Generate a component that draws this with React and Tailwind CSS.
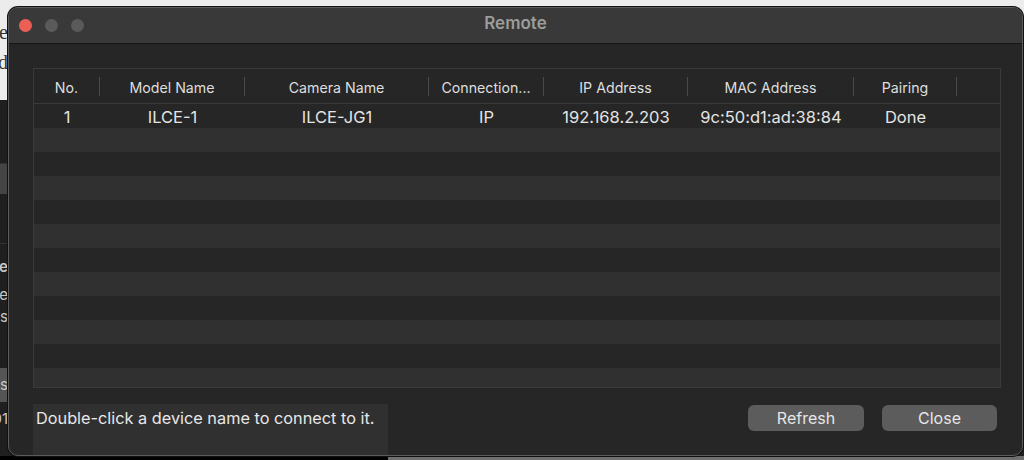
import React from 'react';

const columns = [
  { key: 'no', label: 'No.', w: 'w-[66px]' },
  { key: 'model', label: 'Model Name', w: 'w-[145px]' },
  { key: 'camera', label: 'Camera Name', w: 'w-[184px]' },
  { key: 'conn', label: 'Connection...', w: 'w-[115px]' },
  { key: 'ip', label: 'IP Address', w: 'w-[144px]' },
  { key: 'mac', label: 'MAC Address', w: 'w-[166px]' },
  { key: 'pair', label: 'Pairing', w: 'w-[103px]' },
];

const devices = [
  {
    no: '1',
    model: 'ILCE-1',
    camera: 'ILCE-JG1',
    conn: 'IP',
    ip: '192.168.2.203',
    mac: '9c:50:d1:ad:38:84',
    pair: 'Done',
  },
];

const ROW_COUNT = 12;

export default function App() {
  const rows = Array.from({ length: ROW_COUNT }, (_, i) => devices[i] || null);

  return (
    <div
      className="relative w-[1024px] h-[460px] overflow-hidden bg-[#1f1f1f]"
      style={{ fontFamily: 'Inter, "Noto Sans", sans-serif' }}
    >
      {/* app behind the dialog */}
      <div className="flex flex-col h-full">
        <div className="h-[100px] bg-[#ececec] flex">
          <div className="w-[8px] overflow-hidden flex flex-col items-end pt-[20px] gap-[6px] text-[20px] leading-[24px] text-[#333]" style={{ fontFamily: '"Liberation Serif", serif' }}>
            <span className="whitespace-nowrap">see</span>
            <span className="whitespace-nowrap">and</span>
          </div>
        </div>
        <div className="flex-1 flex flex-col w-[8px] overflow-hidden text-[#c8c8c8] text-[15px]">
          <div className="h-[64px] border-b border-[#333]"></div>
          <div className="h-[30px] bg-[#444]"></div>
          <div className="h-[50px] border-b border-[#333]"></div>
          <div className="flex flex-col items-end pt-[12px] leading-[22px]">
            <span className="whitespace-nowrap font-semibold">Name</span>
            <span className="whitespace-nowrap mt-[6px]">Name</span>
            <span className="whitespace-nowrap">items</span>
          </div>
          <div className="mt-[40px] h-[34px] bg-[#555] flex justify-end items-center">
            <span className="whitespace-nowrap">Settings</span>
          </div>
          <div className="flex justify-end pt-[6px]">
            <span className="whitespace-nowrap">01</span>
          </div>
        </div>
        <div className="h-[4px] flex">
          <div className="w-[388px] bg-black"></div>
          <div className="flex-1 bg-[#707070]"></div>
        </div>
      </div>

      {/* Remote window */}
      <div className="absolute left-[8px] top-[7px] w-[1015px] h-[449px] rounded-[10px] overflow-hidden border border-[#5c5c5c] bg-[#262626] flex flex-col shadow-[0_0_0_1px_#111]">
        <div className="relative h-[36px] shrink-0 bg-[#393939] border-b border-[#161616] flex items-center justify-center">
          <div className="absolute left-[10px] top-[11px] flex gap-[13px]">
            <span className="w-[13px] h-[13px] rounded-full bg-[#ec5f57]"></span>
            <span className="w-[13px] h-[13px] rounded-full bg-[#5a5a5a]"></span>
            <span className="w-[13px] h-[13px] rounded-full bg-[#5a5a5a]"></span>
          </div>
          <span className="text-[17px] font-semibold text-[#9c9c9c] -mt-[3px]">Remote</span>
        </div>

        <div className="flex-1 flex flex-col px-[24px] pt-[24px]">
          <div className="w-[968px] h-[320px] border border-[#3a3a3a] overflow-hidden flex flex-col">
            <div className="h-[35px] shrink-0 flex items-center border-b border-[#3a3a3a] text-[14.2px] text-[#dedede]">
              {columns.map(c => (
                <div key={c.key} className={`${c.w} h-full flex items-center`}>
                  <span className="flex-1 text-center whitespace-nowrap pt-[3px]">{c.label}</span>
                  <span className="w-px h-[19px] bg-[#4a4a4a]"></span>
                </div>
              ))}
              <div className="flex-1"></div>
            </div>
            {rows.map((d, i) => (
              <div
                key={i}
                className={`h-[24px] shrink-0 flex items-center text-[16.5px] text-[#e4e4e4] ${i % 2 === 0 ? 'bg-[#262626]' : 'bg-[#303030]'}`}
              >
                {d && columns.map(c => (
                  <div key={c.key} className={`${c.w} text-center whitespace-nowrap pt-[3px]`}>
                    {d[c.key]}
                  </div>
                ))}
              </div>
            ))}
          </div>

          <div className="flex-1 flex items-start mt-[16px]">
            <div className="w-[355px] self-stretch bg-[#303030] px-[3px] pt-[2px] text-[16.3px] text-[#e8e8e8] whitespace-nowrap">
              Double-click a device name to connect to it.
            </div>
            <div className="ml-auto mr-[1px] flex gap-[18px] pt-[1px]">
              <button className="w-[116px] h-[26px] rounded-[6px] bg-[#5c5c5c] text-[16px] text-[#e6e6e6]">Refresh</button>
              <button className="w-[115px] h-[26px] rounded-[6px] bg-[#5c5c5c] text-[16px] text-[#e6e6e6]">Close</button>
            </div>
          </div>
        </div>
      </div>
    </div>
  );
}
